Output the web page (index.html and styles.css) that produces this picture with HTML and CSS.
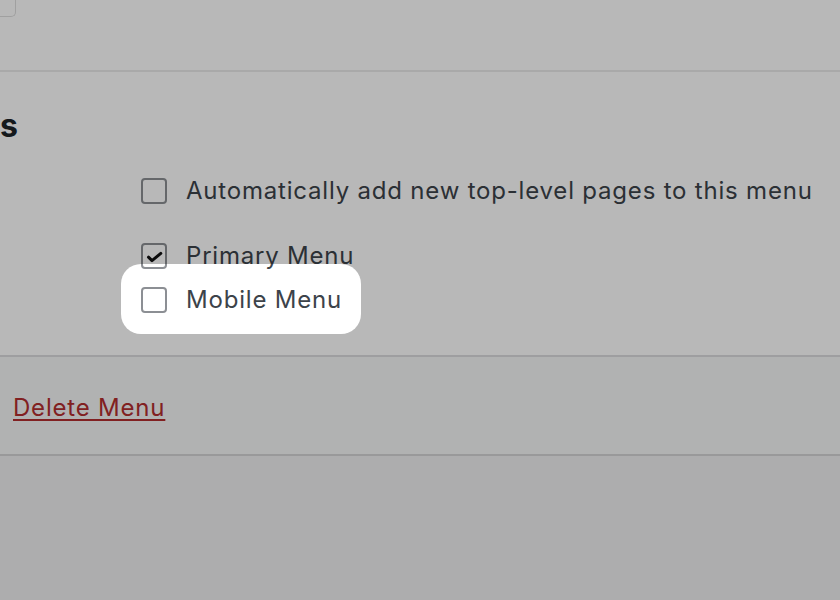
FILE: index.html
```html
<!DOCTYPE html>
<html lang="en">
<head>
<meta charset="utf-8">
<title>Menu Settings</title>
<link rel="stylesheet" href="styles.css">
</head>
<body>
<div class="page">
  <div class="header">
    <div class="field"></div>
  </div>
  <div class="settings">
    <h3 class="title"><span>Menu Settings</span></h3>
    <div class="group auto">
      <label class="opt"><span class="box"></span><span class="txt">Automatically add new top-level pages to this menu</span></label>
    </div>
    <div class="group locations">
      <label class="opt"><span class="box"><svg class="check" viewBox="0 0 26 26" width="26" height="26"><path d="M7.5 14.2 L11 17.6 L19.8 10.4" fill="none" stroke="#111" stroke-width="3" stroke-linecap="round" stroke-linejoin="round"/></svg></span><span class="txt">Primary Menu</span></label>
      <label class="opt mobile"><span class="box"></span><span class="txt">Mobile Menu</span></label>
    </div>
  </div>
  <div class="footer">
    <a class="delete" href="#">Delete Menu</a>
  </div>
  <div class="rest"></div>
</div>
<div class="spotlight"></div>
</body>
</html>
```
FILE: styles.css
```css
html, body {
  margin: 0;
  padding: 0;
}
body {
  position: relative;
  width: 840px;
  height: 600px;
  overflow: hidden;
  font-family: Inter, "Open Sans", "Liberation Sans", sans-serif;
  color: #3c434a;
  background: #f0f0f1;
}
.page {
  display: flex;
  flex-direction: column;
  height: 600px;
}
.header {
  height: 70px;
  background: #fff;
  border-bottom: 2px solid #ebebeb;
  flex: none;
}
.field {
  width: 30px;
  height: 16px;
  margin-left: -16px;
  border: 1px solid #dedede;
  border-top: none;
  border-radius: 0 0 5px 5px;
  background: #fff;
}
.settings {
  height: 283px;
  background: #fff;
  border-bottom: 2px solid #dcdcde;
  flex: none;
  display: flex;
  flex-direction: column;
}
.title {
  margin: 34px 0 0 0;
  width: 18px;
  display: flex;
  justify-content: flex-end;
  white-space: nowrap;
  font-size: 32px;
  line-height: 40px;
  font-weight: 700;
  color: #1d2327;
}
.group {
  margin-left: 141px;
  display: flex;
  flex-direction: column;
}
.auto {
  margin-top: 30px;
}
.locations {
  margin-top: 37px;
  gap: 16px;
}
.opt {
  display: flex;
  align-items: flex-start;
  gap: 19px;
  font-size: 24px;
  line-height: 26px;
  letter-spacing: 0.8px;
  white-space: nowrap;
}
.txt {
  margin-top: 2px;
}
.box {
  margin-top: 2px;
  width: 22px;
  height: 22px;
  border: 2px solid #8c8f94;
  border-radius: 4px;
  background: #fff;
  position: relative;
  flex: none;
}
.check {
  position: absolute;
  left: -2px;
  top: -2px;
}
.footer {
  height: 99px;
  background: #f6f7f7;
  border-bottom: 2px solid #d4d4d6;
  flex: none;
  padding-left: 13px;
  box-sizing: border-box;
}
.delete {
  display: inline-block;
  margin-top: 36px;
  font-size: 24px;
  line-height: 30px;
  letter-spacing: 0.8px;
  color: #b32d2e;
  text-decoration: underline;
  text-underline-offset: 3px;
  text-decoration-thickness: 2px;
}
.rest {
  flex: 1;
  background: #f0f0f1;
}
.spotlight {
  position: absolute;
  left: 121px;
  top: 264px;
  width: 240px;
  height: 70px;
  border-radius: 20px;
  box-shadow: 0 0 0 3000px rgba(0, 0, 0, 0.28);
  pointer-events: none;
}
```
